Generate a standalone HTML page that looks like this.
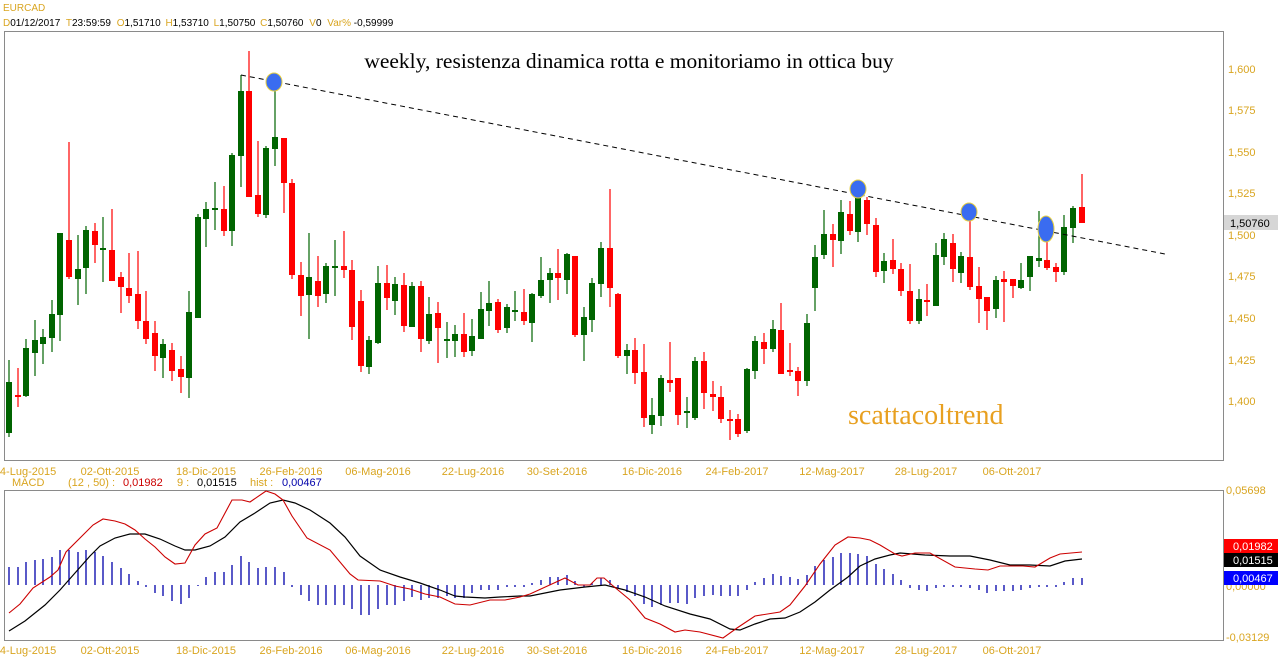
<!DOCTYPE html>
<html><head><meta charset="utf-8"><style>
html,body{margin:0;padding:0;background:#fff;}
body{width:1278px;height:668px;overflow:hidden;position:relative;font-family:"Liberation Sans",Arial,sans-serif;}
svg{position:absolute;left:0;top:0;}
</style></head><body>
<svg width="1278" height="668" viewBox="0 0 1278 668" xmlns="http://www.w3.org/2000/svg">
<g font-family="Liberation Sans, Arial, sans-serif" font-size="10">
<text x="3" y="11" fill="#d9a520">EURCAD</text>
<text x="3" y="26" fill="#000"><tspan fill="#d9a520">D</tspan>01/12/2017 <tspan fill="#d9a520" dx="3">T</tspan>23:59:59 <tspan fill="#d9a520" dx="3">O</tspan>1,51710 <tspan fill="#d9a520" dx="2">H</tspan>1,53710 <tspan fill="#d9a520" dx="2">L</tspan>1,50750 <tspan fill="#d9a520" dx="2">C</tspan>1,50760 <tspan fill="#d9a520" dx="3">V</tspan>0 <tspan fill="#d9a520" dx="3">Var%</tspan> -0,59999</text>
</g>
<rect x="4.5" y="31.5" width="1219" height="429" fill="none" stroke="#8a8a8a"/>
<rect x="4.5" y="490.5" width="1219" height="150" fill="none" stroke="#8a8a8a"/>
<g font-family="Liberation Sans, Arial, sans-serif" font-size="11" fill="#d9a520">
<text x="1228" y="73">1,600</text><text x="1228" y="114">1,575</text><text x="1228" y="156">1,550</text><text x="1228" y="197">1,525</text><text x="1228" y="239">1,500</text><text x="1228" y="280">1,475</text><text x="1228" y="322">1,450</text><text x="1228" y="364">1,425</text><text x="1228" y="405">1,400</text>
</g>
<rect x="1224" y="215" width="54" height="15" fill="#d6d6d6"/>
<text x="1230" y="227" font-family="Liberation Sans, Arial, sans-serif" font-size="11" fill="#000">1,50760</text>
<g font-family="Liberation Sans, Arial, sans-serif" font-size="11" fill="#d9a520" text-anchor="middle">
<text x="25" y="475">24-Lug-2015</text><text x="110" y="475">02-Ott-2015</text><text x="206" y="475">18-Dic-2015</text><text x="291" y="475">26-Feb-2016</text><text x="378" y="475">06-Mag-2016</text><text x="473" y="475">22-Lug-2016</text><text x="557" y="475">30-Set-2016</text><text x="652" y="475">16-Dic-2016</text><text x="737" y="475">24-Feb-2017</text><text x="832" y="475">12-Mag-2017</text><text x="926" y="475">28-Lug-2017</text><text x="1012" y="475">06-Ott-2017</text>
<text x="25" y="654">24-Lug-2015</text><text x="110" y="654">02-Ott-2015</text><text x="206" y="654">18-Dic-2015</text><text x="291" y="654">26-Feb-2016</text><text x="378" y="654">06-Mag-2016</text><text x="473" y="654">22-Lug-2016</text><text x="557" y="654">30-Set-2016</text><text x="652" y="654">16-Dic-2016</text><text x="737" y="654">24-Feb-2017</text><text x="832" y="654">12-Mag-2017</text><text x="926" y="654">28-Lug-2017</text><text x="1012" y="654">06-Ott-2017</text>
</g>
<g font-family="Liberation Sans, Arial, sans-serif" font-size="11">
<text x="12" y="486" fill="#d9a520">MACD</text>
<text x="68" y="486" fill="#d9a520">(12 , 50) :</text>
<text x="123" y="486" fill="#cc0000">0,01982</text>
<text x="177" y="486" fill="#d9a520">9 :</text>
<text x="197" y="486" fill="#000">0,01515</text>
<text x="250" y="486" fill="#d9a520">hist :</text>
<text x="282" y="486" fill="#0000aa">0,00467</text>
<text x="1226" y="494" fill="#d9a520">0,05698</text>
<text x="1226" y="590" fill="#d9a520">0,00000</text>
<text x="1226" y="641" fill="#d9a520">-0,03129</text>
</g>
<rect x="1224" y="539" width="54" height="14" fill="#ff0000"/>
<rect x="1224" y="553" width="54" height="14" fill="#000"/>
<rect x="1224" y="571" width="54" height="14" fill="#0000ff"/>
<g font-family="Liberation Sans, Arial, sans-serif" font-size="11" fill="#fff">
<text x="1233" y="550">0,01982</text><text x="1233" y="564">0,01515</text><text x="1233" y="582">0,00467</text>
</g>

<path fill="none" stroke="#006400" stroke-width="1.2" d="M9 360V437M26 339V397M35 320V376M43 329V364M52 300V352M60 233V341M78 235V305M86 226V294M103 217V282M163 339V378M189 291V398M198 214V318M206 202V247M215 182V230M232 153V246M241 75V187M266 146V218M275 83V166M309 233V339M326 263V303M335 240V296M369 336V374M378 266V344M395 277V315M412 282V327M429 297V344M447 322V358M455 325V357M472 319V356M481 292V339M489 281V326M507 304V333M515 291V321M532 293V342M541 257V298M550 268V303M567 253V294M584 307V361M592 278V332M601 242V297M627 344V374M652 398V434M661 375V426M687 397V428M695 357V420M747 368V433M755 336V379M773 320V352M807 314V386M815 245V311M824 210V259M841 200V254M858 190V242M884 253V283M919 289V324M936 243V306M944 233V265M961 252V283M996 276V318M1021 263V289M1030 256V291M1039 211V267M1064 215V275M1073 206V243"/>
<path fill="none" stroke="#ff0000" stroke-width="1.2" d="M18 368V407M69 142V279M95 223V263M112 209V281M121 272V313M129 253V303M138 251V329M146 291V344M155 321V371M172 343V381M181 356V393M224 186V236M249 51V197M258 141V217M284 138V213M292 179V279M301 262V316M318 256V307M344 231V278M352 260V340M361 290V372M387 265V310M404 273V332M421 281V352M438 302V363M464 313V357M498 299V333M524 289V325M558 249V300M575 256V337M610 189V307M618 293V358M635 338V384M644 344V427M670 342V392M678 378V425M704 352V409M713 381V411M721 386V423M730 410V440M738 414V437M764 333V364M781 303V374M790 343V376M798 367V396M833 224V267M850 201V235M867 197V235M876 218V277M893 239V274M901 263V296M910 264V324M927 284V316M953 234V282M970 213V290M979 267V323M987 297V330M1004 271V322M1013 279V298M1047 230V270M1056 263V282M1082 174V223"/>
<g fill="#006400">
<rect x="6" y="382" width="6" height="51"/><rect x="23" y="348" width="6" height="48"/><rect x="32" y="340" width="6" height="13"/><rect x="40" y="337" width="6" height="7"/><rect x="49" y="314" width="6" height="24"/><rect x="57" y="233" width="6" height="82"/><rect x="75" y="269" width="6" height="10"/><rect x="83" y="230" width="6" height="38"/><rect x="100" y="248" width="6" height="2"/><rect x="160" y="344" width="6" height="14"/><rect x="186" y="312" width="6" height="66"/><rect x="195" y="217" width="6" height="101"/><rect x="203" y="209" width="6" height="10"/><rect x="212" y="208" width="6" height="2"/><rect x="229" y="155" width="6" height="76"/><rect x="238" y="91" width="6" height="65"/><rect x="263" y="148" width="6" height="67"/><rect x="272" y="137" width="6" height="12"/><rect x="306" y="277" width="6" height="18"/><rect x="323" y="266" width="6" height="28"/><rect x="332" y="266" width="6" height="2"/><rect x="366" y="340" width="6" height="27"/><rect x="375" y="283" width="6" height="60"/><rect x="392" y="284" width="6" height="17"/><rect x="409" y="286" width="6" height="41"/><rect x="426" y="314" width="6" height="27"/><rect x="444" y="339" width="6" height="2"/><rect x="452" y="334" width="6" height="7"/><rect x="469" y="336" width="6" height="15"/><rect x="478" y="309" width="6" height="30"/><rect x="486" y="303" width="6" height="8"/><rect x="504" y="307" width="6" height="21"/><rect x="512" y="310" width="6" height="2"/><rect x="529" y="294" width="6" height="29"/><rect x="538" y="280" width="6" height="16"/><rect x="547" y="273" width="6" height="7"/><rect x="564" y="254" width="6" height="26"/><rect x="581" y="317" width="6" height="18"/><rect x="589" y="283" width="6" height="37"/><rect x="598" y="248" width="6" height="36"/><rect x="624" y="350" width="6" height="6"/><rect x="649" y="415" width="6" height="10"/><rect x="658" y="378" width="6" height="38"/><rect x="684" y="411" width="6" height="2"/><rect x="692" y="361" width="6" height="57"/><rect x="744" y="369" width="6" height="62"/><rect x="752" y="341" width="6" height="30"/><rect x="770" y="329" width="6" height="20"/><rect x="804" y="323" width="6" height="58"/><rect x="812" y="257" width="6" height="31"/><rect x="821" y="234" width="6" height="21"/><rect x="838" y="212" width="6" height="29"/><rect x="855" y="193" width="6" height="39"/><rect x="881" y="261" width="6" height="10"/><rect x="916" y="299" width="6" height="22"/><rect x="933" y="255" width="6" height="51"/><rect x="941" y="239" width="6" height="18"/><rect x="958" y="256" width="6" height="17"/><rect x="993" y="280" width="6" height="29"/><rect x="1018" y="280" width="6" height="8"/><rect x="1027" y="256" width="6" height="21"/><rect x="1036" y="258" width="6" height="3"/><rect x="1061" y="227" width="6" height="45"/><rect x="1070" y="208" width="6" height="20"/>
</g>
<g fill="#ff0000">
<rect x="15" y="395" width="6" height="2"/><rect x="66" y="240" width="6" height="37"/><rect x="92" y="231" width="6" height="14"/><rect x="109" y="250" width="6" height="31"/><rect x="118" y="277" width="6" height="10"/><rect x="126" y="288" width="6" height="8"/><rect x="135" y="294" width="6" height="27"/><rect x="143" y="321" width="6" height="18"/><rect x="152" y="333" width="6" height="23"/><rect x="169" y="350" width="6" height="21"/><rect x="178" y="369" width="6" height="8"/><rect x="221" y="209" width="6" height="22"/><rect x="246" y="91" width="6" height="106"/><rect x="255" y="195" width="6" height="19"/><rect x="281" y="138" width="6" height="45"/><rect x="289" y="183" width="6" height="92"/><rect x="298" y="275" width="6" height="21"/><rect x="315" y="281" width="6" height="15"/><rect x="341" y="266" width="6" height="4"/><rect x="349" y="270" width="6" height="57"/><rect x="358" y="301" width="6" height="65"/><rect x="384" y="283" width="6" height="15"/><rect x="401" y="285" width="6" height="41"/><rect x="418" y="286" width="6" height="53"/><rect x="435" y="313" width="6" height="15"/><rect x="461" y="334" width="6" height="18"/><rect x="495" y="302" width="6" height="28"/><rect x="521" y="312" width="6" height="9"/><rect x="555" y="273" width="6" height="5"/><rect x="572" y="256" width="6" height="79"/><rect x="607" y="248" width="6" height="40"/><rect x="615" y="294" width="6" height="62"/><rect x="632" y="350" width="6" height="23"/><rect x="641" y="372" width="6" height="46"/><rect x="667" y="380" width="6" height="3"/><rect x="675" y="378" width="6" height="37"/><rect x="701" y="361" width="6" height="32"/><rect x="710" y="394" width="6" height="3"/><rect x="718" y="397" width="6" height="22"/><rect x="727" y="419" width="6" height="2"/><rect x="735" y="419" width="6" height="15"/><rect x="761" y="342" width="6" height="7"/><rect x="778" y="330" width="6" height="44"/><rect x="787" y="370" width="6" height="2"/><rect x="795" y="371" width="6" height="10"/><rect x="830" y="234" width="6" height="6"/><rect x="847" y="214" width="6" height="17"/><rect x="864" y="200" width="6" height="24"/><rect x="873" y="225" width="6" height="47"/><rect x="890" y="260" width="6" height="9"/><rect x="898" y="269" width="6" height="22"/><rect x="907" y="291" width="6" height="30"/><rect x="924" y="300" width="6" height="2"/><rect x="950" y="243" width="6" height="26"/><rect x="967" y="257" width="6" height="30"/><rect x="976" y="286" width="6" height="13"/><rect x="984" y="297" width="6" height="14"/><rect x="1001" y="279" width="6" height="3"/><rect x="1010" y="279" width="6" height="7"/><rect x="1044" y="260" width="6" height="8"/><rect x="1053" y="267" width="6" height="5"/><rect x="1079" y="207" width="6" height="16"/>
</g>
<path d="M241 75L1165 254" stroke="#000" stroke-width="1" stroke-dasharray="5,4" fill="none"/>
<g fill="#3a6cf0" stroke="#e8d040" stroke-width="1">
<ellipse cx="274" cy="82" rx="8" ry="9"/>
<ellipse cx="858" cy="189" rx="8" ry="9"/>
<ellipse cx="969" cy="212" rx="8" ry="9"/>
<ellipse cx="1046" cy="229" rx="8" ry="13"/>
</g>
<text x="629" y="68" text-anchor="middle" font-family="Liberation Serif, Times New Roman, serif" font-size="21.5" fill="#000">weekly, resistenza dinamica rotta e monitoriamo in ottica buy</text>
<text x="848" y="424" font-family="Liberation Serif, Times New Roman, serif" font-size="28" fill="#e8a020">scattacoltrend</text>

<path fill="none" stroke="#0000aa" stroke-width="1.3" d="M9 585V567M18 585V567M26 585V562M35 585V560M43 585V559M52 585V557M60 585V550M69 585V550M78 585V552M86 585V550M95 585V552M103 585V556M112 585V562M121 585V568M129 585V574M138 585V581M146 585V587M155 585V593M163 585V596M172 585V601M181 585V604M189 585V598M198 585V586M206 585V577M215 585V572M224 585V572M232 585V565M241 585V556M249 585V562M258 585V568M266 585V567M275 585V567M284 585V572M292 585V587M301 585V595M309 585V601M318 585V605M326 585V605M335 585V605M344 585V605M352 585V609M361 585V615M369 585V615M378 585V609M387 585V605M395 585V605M404 585V601M412 585V597M421 585V600M429 585V598M438 585V598M447 585V596M455 585V598M464 585V598M472 585V593M481 585V590M489 585V590M498 585V590M507 585V587M515 585V587M524 585V587M532 585V583M541 585V580M550 585V577M558 585V577M567 585V575M575 585V581M584 585V587M592 585V583M601 585V578M610 585V580M618 585V588M627 585V592M635 585V596M644 585V604M652 585V607M661 585V605M670 585V603M678 585V603M687 585V604M695 585V598M704 585V596M713 585V595M721 585V596M730 585V596M738 585V596M747 585V590M755 585V582M764 585V578M773 585V574M781 585V576M790 585V577M798 585V579M807 585V575M815 585V566M824 585V560M833 585V557M841 585V553M850 585V553M858 585V554M867 585V556M876 585V564M884 585V569M893 585V574M901 585V580M910 585V588M919 585V590M927 585V591M936 585V588M944 585V587M953 585V587M961 585V587M970 585V588M979 585V590M987 585V593M996 585V591M1004 585V591M1013 585V591M1021 585V590M1030 585V588M1039 585V587M1047 585V587M1056 585V587M1064 585V582M1073 585V578M1082 585V578"/>
<polyline fill="none" stroke="#000" stroke-width="1.2" points="9,631 25,621 45,605 60,590 75,573 90,556 100,546 115,538 130,534 145,534 160,539 175,546 185,550 195,550 210,546 225,537 240,522 255,513 270,503 283,500 295,503 310,510 330,523 345,537 360,556 380,570 400,577 420,583 440,590 455,596 465,597 485,598 500,597 520,596 530,596 560,590 585,587 605,585 625,590 645,597 665,606 690,614 710,619 730,629 740,630 755,624 770,619 785,618 800,612 815,602 830,590 848,577 860,566 875,559 890,555 900,553 925,555 950,556 970,556 990,560 1010,565 1030,565 1050,566 1065,561 1082,559"/>
<polyline fill="none" stroke="#cc0000" stroke-width="1.1" points="9,613 20,604 33,588 50,577 58,570 66,552 80,538 93,525 103,519 115,521 125,524 135,530 145,539 155,547 165,557 175,564 185,563 195,545 205,534 217,528 232,500 242,500 250,502 266,491 275,494 283,500 292,516 307,538 330,550 350,574 358,580 380,581 395,586 410,589 425,594 440,597 455,604 470,605 490,600 505,600 520,597 530,594 565,578 578,585 590,585 597,578 604,578 612,585 630,600 645,618 660,624 675,632 685,630 700,632 723,638 737,628 755,616 780,612 790,605 805,586 820,564 835,545 848,537 860,538 870,540 880,545 895,554 902,556 915,553 930,553 955,567 975,569 988,570 1000,566 1023,566 1035,567 1050,558 1060,554 1082,552"/>
</svg>
</body></html>
